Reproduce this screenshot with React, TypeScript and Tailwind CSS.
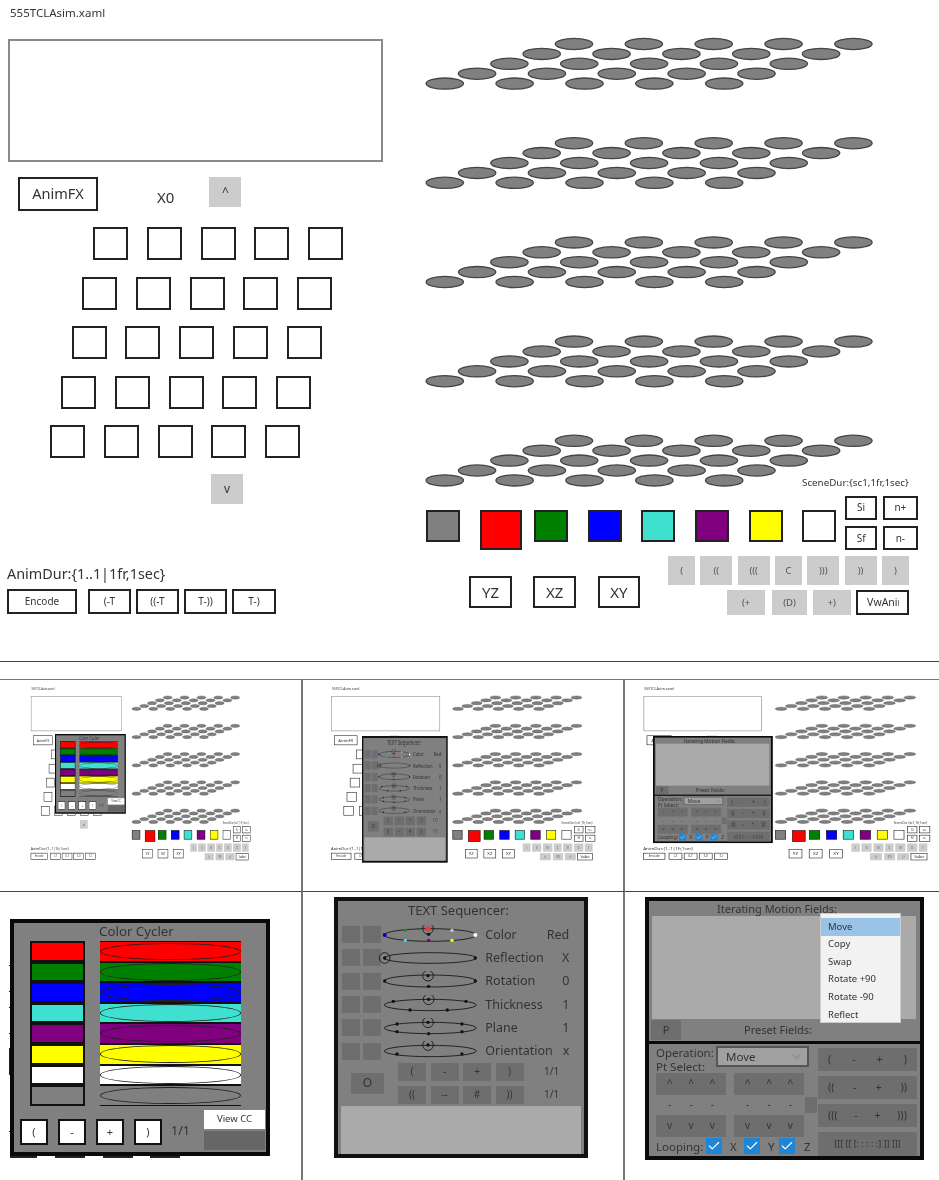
import { Check, ChevronDown } from "lucide-react";

const squareRows = ["ml-[93px]", "ml-[82px]", "ml-[71.5px]", "ml-[61px]", "ml-[50px]"];

const swatches = [
  { name: "gray", cls: "ml-0 mt-[14.4px] h-[32px] w-[34px] bg-[#808080]" },
  { name: "red", cls: "ml-[20px] mt-[14px] h-[40px] w-[42px] bg-[#ff0000]" },
  { name: "green", cls: "ml-[11.5px] mt-[14.4px] h-[32px] w-[34px] bg-[#008000]" },
  { name: "blue", cls: "ml-[20px] mt-[14.4px] h-[32px] w-[34px] bg-[#0000ff]" },
  { name: "turquoise", cls: "ml-[19.7px] mt-[14.4px] h-[32px] w-[34px] bg-[#40e0d0]" },
  { name: "purple", cls: "ml-[19.8px] mt-[14.4px] h-[32px] w-[34px] bg-[#800080]" },
  { name: "yellow", cls: "ml-[19.7px] mt-[14.4px] h-[32px] w-[34px] bg-[#ffff00]" },
  { name: "white", cls: "ml-[19.6px] mt-[14.4px] h-[32px] w-[34px] bg-white" },
];

const greyTop = [
  { t: "(", cls: "w-[27px]" },
  { t: "((", cls: "w-[32px]" },
  { t: "(((", cls: "w-[32px]" },
  { t: "C", cls: "w-[27px]" },
  { t: ")))", cls: "w-[32px]" },
  { t: "))", cls: "w-[32px]" },
  { t: ")", cls: "w-[27px]" },
];

const timeButtons = [
  { t: "(-T", cls: "ml-[11px] w-[43px]" },
  { t: "((-T", cls: "ml-[5px] w-[43px]" },
  { t: "T-))", cls: "ml-[5px] w-[43px]" },
  { t: "T-)", cls: "ml-[5px] w-[44px]" },
];

// lattice of points, one layer per z, skewed to the right as it goes back
function PointLattice() {
  const dots: { key: string; cx: number; cy: number }[] = [];
  for (let g = 0; g < 5; g++) {
    for (let r = 0; r < 5; r++) {
      for (let c = 0; c < 5; c++) {
        dots.push({
          key: `${g}-${r}-${c}`,
          cx: 148 - 32.3 * r + 69.85 * c,
          cy: 6 + 9.9 * r + 99.2 * g,
        });
      }
    }
  }
  return (
    <svg width="449" height="450" viewBox="0 0 449 450" className="block overflow-visible">
      {dots.map((d) => (
        <ellipse key={d.key} cx={d.cx} cy={d.cy} rx="18.7" ry="5.6" fill="#808080" stroke="#444" strokeWidth="1.3" />
      ))}
    </svg>
  );
}

function MainScreen() {
  return (
    <div className="flex h-[661px] w-[939px] bg-white text-[#333]">
      <div className="w-[426px] shrink-0">
        <div className="h-[39px] pl-[10px] pt-[5px] text-[11.5px] leading-4">555TCLAsim.xaml</div>
        <div className="ml-[8px] h-[123px] w-[375px] border-2 border-[#8a8a8a]" />
        <div className="mt-[15px] flex h-[34px] items-start">
          <div className="ml-[18px] flex h-[34px] w-[80px] items-center justify-center border-2 border-[#222] text-[14.5px]">AnimFX</div>
          <div className="ml-[59px] mt-[10px] text-[15px] leading-5">X0</div>
          <div className="ml-[35px] flex h-[30px] w-[32px] items-center justify-center bg-[#cccccc] text-[12px]">^</div>
        </div>
        <div className="mt-[16px] flex flex-col gap-[16.5px]">
          {squareRows.map((cls) => (
            <div key={cls} className={`flex gap-[18.75px] ${cls}`}>
              {[0, 1, 2, 3, 4].map((i) => (
                <div key={i} className="h-[33px] w-[35px] border-2 border-[#222]" />
              ))}
            </div>
          ))}
        </div>
        <div className="ml-[211px] mt-[16px] flex h-[30px] w-[32px] items-center justify-center bg-[#cccccc] text-[12px]">v</div>
        <div className="ml-[7px] mt-[60px] h-[20px] text-[14.4px] leading-5">AnimDur:{"{1..1|1fr,1sec}"}</div>
        <div className="mt-[5px] flex">
          <div className="ml-[7px] flex h-[25px] w-[70px] items-center justify-center border-2 border-[#222] text-[10px]">Encode</div>
          {timeButtons.map((b) => (
            <div key={b.t} className={`flex h-[25px] items-center justify-center border-2 border-[#222] text-[10px] ${b.cls}`}>
              {b.t}
            </div>
          ))}
        </div>
      </div>

      <div className="w-[513px] pt-[38px]">
        <PointLattice />
        <div className="-mt-[12px] h-[13px] pl-[376px] text-[9.8px] leading-[13px]">SceneDur:{"{sc1,1fr,1sec}"}</div>
        <div className="mt-[6.6px] flex items-start">
          {swatches.map((s) => (
            <div key={s.name} className={`border-2 border-[#222] ${s.cls}`} />
          ))}
          <div className="ml-[8.9px] grid grid-cols-[32px_35px] gap-x-[5.7px] gap-y-[6px] text-[10px]">
            {["Si", "n+", "Sf", "n-"].map((t) => (
              <div key={t} className="flex h-[24.3px] items-center justify-center border-2 border-[#222]">
                {t}
              </div>
            ))}
          </div>
        </div>
        <div className="mt-[5.6px] flex items-start">
          <div className="ml-[43.4px] mt-[20px] flex gap-[21.6px] text-[15px]">
            {["YZ", "XZ", "XY"].map((t) => (
              <div key={t} className="flex h-[32.5px] w-[42.5px] items-center justify-center border-2 border-[#222]">
                {t}
              </div>
            ))}
          </div>
          <div className="ml-[28px] flex flex-col gap-[5px] text-[9.5px] text-[#555]">
            <div className="flex gap-[5.3px]">
              {greyTop.map((b) => (
                <div key={b.t} className={`flex h-[29.7px] items-center justify-center bg-[#cccccc] ${b.cls}`}>
                  {b.t}
                </div>
              ))}
            </div>
            <div className="flex pl-[59px]">
              <div className="flex h-[24.7px] w-[38px] items-center justify-center bg-[#cccccc]">(+</div>
              <div className="ml-[7px] flex h-[24.7px] w-[35px] items-center justify-center bg-[#cccccc]">(D)</div>
              <div className="ml-[6px] flex h-[24.7px] w-[37.5px] items-center justify-center bg-[#cccccc]">+)</div>
              <div className="ml-[5.5px] h-[24.7px] w-[53px] border-2 border-[#222] pl-[9px] text-[10.5px] leading-[20px] text-[#333]">
                <div className="w-[32px] overflow-hidden whitespace-nowrap">VwAnim</div>
              </div>
            </div>
          </div>
        </div>
      </div>
    </div>
  );
}

const cyclerColors = ["bg-[#ff0000]", "bg-[#008000]", "bg-[#0000ff]", "bg-[#40e0d0]", "bg-[#800080]", "bg-[#ffff00]", "bg-white", "bg-[#808080]"];

function ColorCycler() {
  return (
    <div className="h-[237px] w-[260px] border-4 border-[#0a0a0a] bg-[#808080] text-[#333]">
      <div className="h-[18px] pl-[85px] text-[13.3px] leading-[17px]">Color Cycler</div>
      <div className="flex flex-col pl-[16px]">
        {cyclerColors.map((cls) => (
          <div key={cls} className="flex h-[20.6px]">
            <div className={`w-[55px] border-2 border-[#111] ${cls}`} />
            <div className={`relative ml-[15px] w-[141px] border-y border-[#111] ${cls}`}>
              <div className="absolute inset-x-0 inset-y-[0.5px] rounded-[50%] border border-[#222]" />
            </div>
          </div>
        ))}
      </div>
      <div className="mt-[4px] flex items-start">
        <div className="flex w-[190px] items-center pl-[6px] pt-[9px] text-[11px]">
          {["(", "-", "+", ")"].map((t, i) => (
            <div key={t} className={`flex h-[26px] w-[28px] items-center justify-center border-2 border-[#111] bg-white ${i > 0 ? "ml-[10px]" : ""}`}>
              {t}
            </div>
          ))}
          <div className="ml-[9px] text-[12.5px]">1/1</div>
        </div>
        <div className="flex w-[61px] flex-col gap-[2px]">
          <div className="flex h-[19px] items-center justify-center bg-white text-[9.5px]">View CC</div>
          <div className="h-[19px] bg-[#666666]" />
        </div>
      </div>
    </div>
  );
}

type SeqRow = {
  label: string;
  value: string;
  ry: number;
  ring: number[];
  dots: { x: number; y: number; fill: string; r?: number }[];
};

const black = "#111";
const seqRows: SeqRow[] = [
  {
    label: "Color",
    value: "Red",
    ry: 19,
    ring: [153, 11],
    dots: [
      { x: 23, y: 30, fill: "#0000c8", r: 6 },
      { x: 85, y: 16, fill: "#1d8a1d", r: 5 },
      { x: 153, y: 11, fill: "#e04040", r: 8 },
      { x: 155, y: 28, fill: black, r: 5 },
      { x: 225, y: 16, fill: "#c8c8c8", r: 5 },
      { x: 295, y: 30, fill: "#ffffff", r: 6 },
      { x: 85, y: 46, fill: "#40e0d0", r: 5 },
      { x: 155, y: 46, fill: "#800080", r: 5 },
      { x: 225, y: 46, fill: "#ffff00", r: 5 },
    ],
  },
  { label: "Reflection", value: "X", ry: 16, ring: [23, 30], dots: [{ x: 23, y: 30, fill: black }, { x: 295, y: 30, fill: black }] },
  { label: "Rotation", value: "0", ry: 18, ring: [153, 14], dots: [{ x: 153, y: 14, fill: black }, { x: 23, y: 30, fill: black }, { x: 295, y: 30, fill: black }, { x: 155, y: 46, fill: black }] },
  { label: "Thickness", value: "1", ry: 17, ring: [155, 13], dots: [{ x: 155, y: 13, fill: black }, { x: 49, y: 19, fill: black }, { x: 267, y: 19, fill: black }, { x: 99, y: 45, fill: black }, { x: 211, y: 45, fill: black }] },
  { label: "Plane", value: "1", ry: 17, ring: [153, 13], dots: [{ x: 153, y: 13, fill: black }, { x: 60, y: 18, fill: black }, { x: 255, y: 18, fill: black }, { x: 60, y: 41, fill: black }, { x: 255, y: 41, fill: black }, { x: 155, y: 47, fill: black }] },
  { label: "Orientation", value: "x", ry: 17, ring: [153, 12], dots: [{ x: 153, y: 12, fill: black }, { x: 60, y: 39, fill: black }, { x: 255, y: 39, fill: black }] },
];

function SeqOrbit({ row }: { row: SeqRow }) {
  return (
    <svg width="103.3" height="20" viewBox="0 0 310 60" className="-ml-[4px] block shrink-0">
      <ellipse cx="160" cy="30" rx="138" ry={row.ry} fill="none" stroke={black} strokeWidth="2.5" />
      <circle cx={row.ring[0]} cy={row.ring[1]} r="16" fill="none" stroke={black} strokeWidth="2.5" />
      {row.dots.map((d) => (
        <circle key={`${d.x}-${d.y}`} cx={d.x} cy={d.y} r={d.r ?? 5} fill={d.fill} />
      ))}
    </svg>
  );
}

function TextSequencer() {
  return (
    <div className="h-[261px] w-[254px] border-[4px] border-[#111] bg-[#808080] text-[#333]">
      <div className="h-[22px] pl-[70px] text-[13px] leading-[18px]">TEXT Sequencer:</div>
      {seqRows.map((row) => (
        <div key={row.label} className="flex h-[23.3px] items-center pl-[4px]">
          <div className="h-[17px] w-[18px] shrink-0 bg-[#6e6e6e]" />
          <div className="ml-[3px] h-[17px] w-[18px] shrink-0 bg-[#6e6e6e]" />
          <SeqOrbit row={row} />
          <div className="ml-[5px] flex w-[84px] justify-between whitespace-nowrap text-[12.5px] leading-4">
            <span>{row.label}</span>
            <span>{row.value}</span>
          </div>
        </div>
      ))}
      <div className="flex items-center text-[10px]">
        <div className="ml-[13px] flex h-[21px] w-[33px] items-center justify-center bg-[#6e6e6e] text-[12px]">O</div>
        <div className="ml-[14px] flex flex-col gap-[5px]">
          {[["(", "-", "+", ")"], ["((", "--", "#", "))"]].map((set) => (
            <div key={set[0]} className="flex items-center gap-[4.5px]">
              {set.map((t) => (
                <div key={t} className="flex h-[18px] w-[28px] items-center justify-center bg-[#6e6e6e]">
                  {t}
                </div>
              ))}
              <div className="ml-[16px] text-[10px]">1/1</div>
            </div>
          ))}
        </div>
      </div>
      <div className="ml-[3px] mt-[2px] h-[48px] w-[240px] bg-[#aaaaaa]" />
    </div>
  );
}

const menuItems = ["Move", "Copy", "Swap", "Rotate +90", "Rotate -90", "Reflect"];

const presetRows = [
  ["(", "-", "+", ")"],
  ["((", "-", "+", "))"],
  ["(((", "-", "+", ")))"],
];

function PadBlock({ glyph, dark }: { glyph: string; dark: boolean }) {
  return (
    <div className={`flex h-[22px] w-[70px] items-center justify-around px-[3px] ${dark ? "bg-[#6e6e6e]" : ""}`}>
      <span>{glyph}</span>
      <span>{glyph}</span>
      <span>{glyph}</span>
    </div>
  );
}

function LoopCheck() {
  return (
    <div className="flex h-[16px] w-[16px] items-center justify-center bg-[#1f86d6]">
      <Check size={14} strokeWidth={2} className="text-white" />
    </div>
  );
}

function MotionFields({ open }: { open: boolean }) {
  return (
    <div className="relative h-[263px] w-[279px] border-[4px] border-[#0a0a0a] bg-[#808080] text-[#333]">
      <div className="h-[15px] whitespace-nowrap pl-[68px] text-[11px] leading-[15px]">Iterating Motion Fields:</div>
      <div className="ml-[3px] h-[103px] w-[264px] bg-[#aaaaaa]" />
      <div className="flex h-[21.7px] items-center">
        <div className="ml-[2px] flex h-[20px] w-[30px] items-center justify-center bg-[#6e6e6e] text-[11px]">P</div>
        <div className="ml-[63px] text-[11px] leading-4">Preset Fields:</div>
      </div>
      <div className="flex h-[115px] border-t-[3.5px] border-[#0a0a0a]">
        <div className="ml-[7px] w-[162px] text-[10px]">
          <div className="flex h-[29px] items-start pt-[2px]">
            <div className="w-[60px] whitespace-nowrap text-[11.5px] leading-[14.5px]">
              Operation:
              <br />
              Pt Select:
            </div>
            <div className="flex h-[21px] w-[93px] items-center justify-between border-2 border-[#555] bg-[#a0a0a0] pl-[8px] pr-[3px] text-[11.5px]">
              Move
              <ChevronDown size={15} strokeWidth={1} className="text-[#666]" />
            </div>
          </div>
          <div className="flex gap-[8px]">
            <PadBlock glyph="^" dark />
            <PadBlock glyph="^" dark />
          </div>
          <div className="flex h-[20px] items-center gap-[8px]">
            <PadBlock glyph="-" dark={false} />
            <PadBlock glyph="-" dark={false} />
            <div className="-ml-[7px] h-[16px] w-[12px] bg-[#6e6e6e]" />
          </div>
          <div className="flex gap-[8px]">
            <PadBlock glyph="v" dark />
            <PadBlock glyph="v" dark />
          </div>
          <div className="flex h-[19px] items-center whitespace-nowrap text-[11.5px]">
            <span className="w-[50px]">Looping:</span>
            <LoopCheck />
            <span className="ml-[8px] w-[14px]">X</span>
            <LoopCheck />
            <span className="ml-[8px] w-[11px]">Y</span>
            <LoopCheck />
            <span className="ml-[9px]">Z</span>
          </div>
        </div>
        <div className="flex w-[99px] flex-col gap-[5px] pt-[4px] text-[11px]">
          {presetRows.map((set) => (
            <div key={set[0]} className="flex h-[23px] items-center justify-between bg-[#6e6e6e] px-[10px]">
              {set.map((t) => (
                <span key={t}>{t}</span>
              ))}
            </div>
          ))}
          <div className="flex h-[24px] items-center justify-center whitespace-nowrap bg-[#6e6e6e] text-[9px]">[[[ [[ [: : : : :] ]] ]]]</div>
        </div>
      </div>
      {open && (
        <div className="absolute left-[171px] top-[12px] h-[110px] w-[81px] overflow-hidden border border-[#ccc] bg-[#f2f2f2] pt-[4px] text-[9.5px]">
          {menuItems.map((m, i) => (
            <div key={m} className={`flex h-[17.6px] items-center pl-[7px] ${i === 0 ? "bg-[#99c4e8]" : ""}`}>
              {m}
            </div>
          ))}
        </div>
      )}
    </div>
  );
}

export default function App() {
  return (
    <div className="h-[1180px] w-[939px] overflow-hidden bg-white font-['Noto_Sans',sans-serif] blur-[0.35px]">
      <div className="h-[662px] border-b border-[#444]">
        <MainScreen />
      </div>
      <div className="h-[17px]" />
      <div className="grid grid-cols-[303px_322px_314px] grid-rows-[212px_288px] border-t border-[#777]">
        {/* small previews: the same screen with a panel popped up over it */}
        <div className="relative overflow-hidden border-b border-r-2 border-b-[#444] border-r-[#777] blur-[0.3px]">
          <div className="ml-[29px] mt-[4.5px] origin-top-left [transform:scale(0.2416,0.285)]">
            <MainScreen />
          </div>
          <div className="absolute left-[55px] top-[53.7px] origin-top-left [transform:scale(0.272,0.336)]">
            <ColorCycler />
          </div>
        </div>
        <div className="relative overflow-hidden border-b border-r-2 border-b-[#444] border-r-[#777] blur-[0.3px]">
          <div className="ml-[25.7px] mt-[4.5px] origin-top-left [transform:scale(0.29,0.285)]">
            <MainScreen />
          </div>
          <div className="absolute left-[59px] top-[55.7px] origin-top-left [transform:scale(0.337,0.485)]">
            <TextSequencer />
          </div>
        </div>
        <div className="relative overflow-hidden border-b border-b-[#444] blur-[0.3px]">
          <div className="ml-[16px] mt-[4.5px] origin-top-left [transform:scale(0.315,0.285)]">
            <MainScreen />
          </div>
          <div className="absolute left-[28px] top-[56px] origin-top-left [transform:scale(0.429,0.407)]">
            <MotionFields open={false} />
          </div>
        </div>

        {/* enlarged panels */}
        <div className="relative border-r-2 border-r-[#777] pl-[10px] pt-[27px]">
          <ColorCycler />
          <div className="flex h-[2px] items-start">
            <div className="h-[1.5px] w-[27px] bg-[#222]" />
            <div className="ml-[18px] h-[1.5px] w-[30px] bg-[#222]" />
            <div className="ml-[18px] h-[1.5px] w-[30px] bg-[#222]" />
            <div className="ml-[17px] h-[1.5px] w-[30px] bg-[#222]" />
          </div>
          <div className="absolute left-[9px] top-[73px] h-[1px] w-[1px] bg-[#222]" />
          <div className="absolute left-[9px] top-[99px] h-[1px] w-[1px] bg-[#222]" />
          <div className="absolute left-[9px] top-[115px] h-[1px] w-[1px] bg-[#222]" />
          <div className="absolute left-[9px] top-[141px] h-[1px] w-[1px] bg-[#222]" />
          <div className="absolute left-[9px] top-[156px] h-[27px] w-[1px] bg-[#222]" />
          <div className="absolute left-[9px] top-[239px] h-[1px] w-[1px] bg-[#222]" />
        </div>
        <div className="border-r-2 border-r-[#777] pl-[31px] pt-[5px]">
          <TextSequencer />
        </div>
        <div className="pl-[20px] pt-[5px]">
          <MotionFields open />
        </div>
      </div>
    </div>
  );
}
